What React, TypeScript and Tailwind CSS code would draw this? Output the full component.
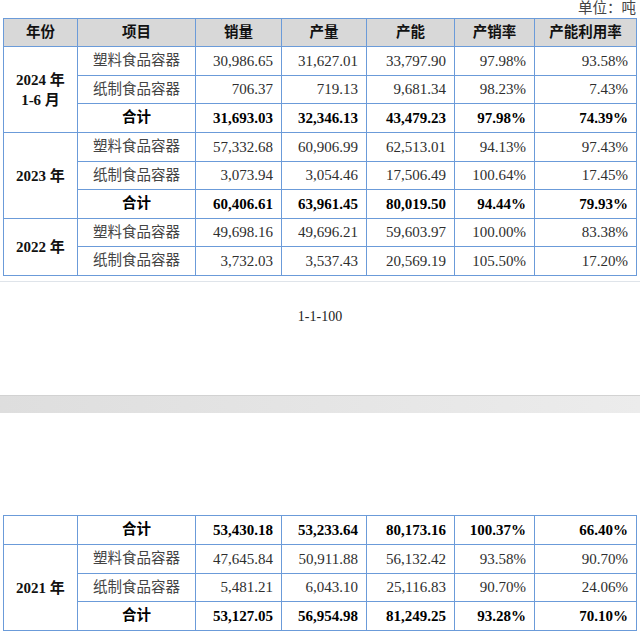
import React from "react";

const font = { fontFamily: '"Liberation Serif", "Noto Sans CJK SC", serif' };

type Row = {
  year?: React.ReactNode;
  span?: number;
  item: string;
  vals: string[];
  bold?: boolean;
  h: number;
};

const B = "border border-[#6b9bd9]";

function Cells({ r }: { r: Row }) {
  return (
    <>
      <td
        className={`${B} text-center ${
          r.bold ? "font-bold text-black" : "text-[#444]"
        } text-[14.5px]`}
      >
        {r.item}
      </td>
      {r.vals.map((v, i) => (
        <td
          key={i}
          className={`${B} text-right pr-[8px] text-[15px] ${
            r.bold ? "font-bold text-black" : "text-[#2e2e2e]"
          }`}
        >
          {v}
        </td>
      ))}
    </>
  );
}

function Table({ rows, header }: { rows: Row[]; header?: boolean }) {
  return (
    <table
      className="border-collapse table-fixed w-[633px] ml-[3px]"
      style={font}
    >
      <colgroup>
        <col className="w-[74px]" />
        <col className="w-[118px]" />
        <col className="w-[86px]" />
        <col className="w-[85px]" />
        <col className="w-[88px]" />
        <col className="w-[80px]" />
        <col className="w-[102px]" />
      </colgroup>
      <tbody>
        {header && (
          <tr className="h-[28px] bg-[#d8d8d8]">
            {["年份", "项目", "销量", "产量", "产能", "产销率", "产能利用率"].map(
              (t) => (
                <td
                  key={t}
                  className={`${B} text-center font-bold text-[14.5px] text-[#111]`}
                >
                  {t}
                </td>
              )
            )}
          </tr>
        )}
        {rows.map((r, i) => (
          <tr key={i} style={{ height: r.h }}>
            {r.year !== undefined && (
              <td
                rowSpan={r.span}
                className={`${B} text-center font-bold text-[15px] leading-[20px] text-[#111]`}
              >
                {r.year}
              </td>
            )}
            <Cells r={r} />
          </tr>
        ))}
      </tbody>
    </table>
  );
}

const rows1: Row[] = [
  {
    year: (
      <>
        2024 年
        <br />
        1-6 月
      </>
    ),
    span: 3,
    item: "塑料食品容器",
    vals: ["30,986.65", "31,627.01", "33,797.90", "97.98%", "93.58%"],
    h: 29,
  },
  {
    item: "纸制食品容器",
    vals: ["706.37", "719.13", "9,681.34", "98.23%", "7.43%"],
    h: 28,
  },
  {
    item: "合计",
    bold: true,
    vals: ["31,693.03", "32,346.13", "43,479.23", "97.98%", "74.39%"],
    h: 29,
  },
  {
    year: "2023 年",
    span: 3,
    item: "塑料食品容器",
    vals: ["57,332.68", "60,906.99", "62,513.01", "94.13%", "97.43%"],
    h: 29,
  },
  {
    item: "纸制食品容器",
    vals: ["3,073.94", "3,054.46", "17,506.49", "100.64%", "17.45%"],
    h: 28,
  },
  {
    item: "合计",
    bold: true,
    vals: ["60,406.61", "63,961.45", "80,019.50", "94.44%", "79.93%"],
    h: 29,
  },
  {
    year: "2022 年",
    span: 2,
    item: "塑料食品容器",
    vals: ["49,698.16", "49,696.21", "59,603.97", "100.00%", "83.38%"],
    h: 28,
  },
  {
    item: "纸制食品容器",
    vals: ["3,732.03", "3,537.43", "20,569.19", "105.50%", "17.20%"],
    h: 29,
  },
];

const rows2: Row[] = [
  {
    year: "",
    span: 1,
    item: "合计",
    bold: true,
    vals: ["53,430.18", "53,233.64", "80,173.16", "100.37%", "66.40%"],
    h: 29,
  },
  {
    year: "2021 年",
    span: 3,
    item: "塑料食品容器",
    vals: ["47,645.84", "50,911.88", "56,132.42", "93.58%", "90.70%"],
    h: 29,
  },
  {
    item: "纸制食品容器",
    vals: ["5,481.21", "6,043.10", "25,116.83", "90.70%", "24.06%"],
    h: 28,
  },
  {
    item: "合计",
    bold: true,
    vals: ["53,127.05", "56,954.98", "81,249.25", "93.28%", "70.10%"],
    h: 29,
  },
];

export default function App() {
  return (
    <div className="w-[640px] h-[632px] bg-white overflow-hidden" style={font}>
      <div className="h-[18px] flex justify-end pr-[4px]">
        <span className="text-[14.5px] leading-[16px] text-[#444]">
          单位：吨
        </span>
      </div>
      <Table rows={rows1} header />
      <div className="mt-[5px] h-px bg-[#dfe4ea]" />
      <div className="mt-[27px] text-center text-[14px] leading-[16px] text-[#222]">
        1-1-100
      </div>
      <div className="mt-[70px] h-[18px] border-t border-[#d2d2d2] bg-gradient-to-r from-[#dedede] to-[#ececec]" />
      <div className="mt-[102px]">
        <Table rows={rows2} />
      </div>
    </div>
  );
}
